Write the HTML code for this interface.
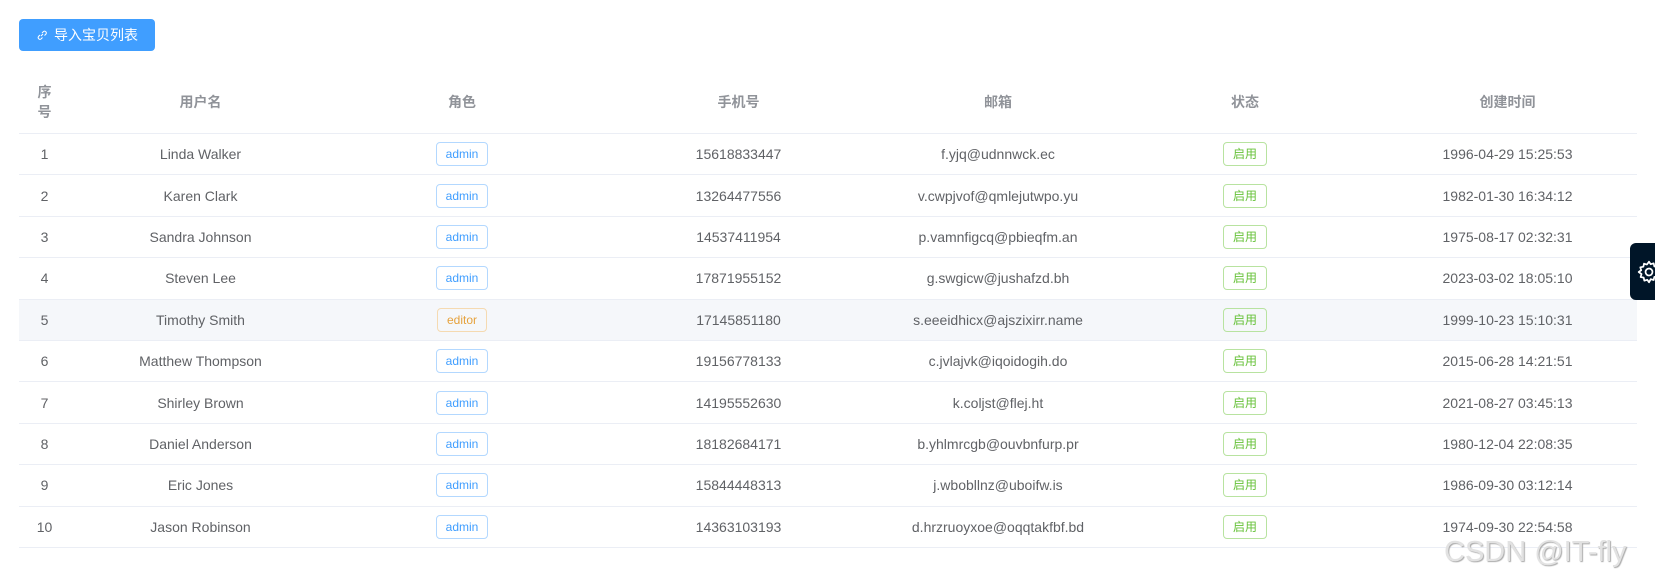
<!DOCTYPE html>
<html><head><meta charset="utf-8"><style>
body{margin:0;width:1655px;height:583px;background:#fff;font-family:"Liberation Sans","Noto Sans CJK SC",sans-serif;position:relative;overflow:hidden}
.btn{position:absolute;left:19px;top:19px;width:136px;height:32px;background:#409eff;border-radius:4px;color:#fff;font-size:14px;line-height:32px;text-align:center}
table{position:absolute;left:19px;top:71px;border-collapse:collapse;table-layout:fixed;width:1618px;font-size:14px;color:#606266}
th{color:#909399;font-weight:bold;height:62px;padding:0;border-bottom:1px solid #ebeef5}
td{height:40.4px;padding:0;text-align:center;border-bottom:1px solid #ebeef5}
th:first-child{padding:0 14px}
tr.h td{background:#f5f7fa}
.tag{display:inline-block;height:22px;line-height:22px;padding:0 9px;border:1px solid #b3d8ff;border-radius:4px;color:#409eff;font-size:12px}
.tag.w{border-color:#f5dab1;color:#e6a23c}
.tag.s{border-color:#b8e3a0;color:#67c23a}
.gear{position:absolute;left:1630px;top:243px;width:40px;height:57px;background:#001528;border-radius:6px}
.wm{position:absolute;left:1444px;top:536px;font-size:29px;color:#e2e2e2;text-shadow:1px 1px 1px #aaa}
</style></head><body>
<div class="btn"><svg width="12" height="12" viewBox="0 0 12 12" style="vertical-align:-1px;margin-right:6px"><path d="M5 7L7 5M4 6L2.5 7.5a1.8 1.8 0 0 0 2.5 2.5L6.5 8.5M6 4L7.5 2.5a1.8 1.8 0 0 1 2.5 2.5L8.5 6.5" stroke="#fff" fill="none" stroke-width="1"/></svg>导入宝贝列表</div>
<table>
<colgroup><col style="width:51px"><col style="width:261px"><col style="width:262px"><col style="width:291px"><col style="width:228px"><col style="width:266px"><col style="width:259px"></colgroup>
<tr><th>序号</th><th>用户名</th><th>角色</th><th>手机号</th><th>邮箱</th><th>状态</th><th>创建时间</th></tr>
<tr><td>1</td><td>Linda Walker</td><td><span class="tag">admin</span></td><td>15618833447</td><td>f.yjq@udnnwck.ec</td><td><span class="tag s">启用</span></td><td>1996-04-29 15:25:53</td></tr>
<tr><td>2</td><td>Karen Clark</td><td><span class="tag">admin</span></td><td>13264477556</td><td>v.cwpjvof@qmlejutwpo.yu</td><td><span class="tag s">启用</span></td><td>1982-01-30 16:34:12</td></tr>
<tr><td>3</td><td>Sandra Johnson</td><td><span class="tag">admin</span></td><td>14537411954</td><td>p.vamnfigcq@pbieqfm.an</td><td><span class="tag s">启用</span></td><td>1975-08-17 02:32:31</td></tr>
<tr><td>4</td><td>Steven Lee</td><td><span class="tag">admin</span></td><td>17871955152</td><td>g.swgicw@jushafzd.bh</td><td><span class="tag s">启用</span></td><td>2023-03-02 18:05:10</td></tr>
<tr class="h"><td>5</td><td>Timothy Smith</td><td><span class="tag w">editor</span></td><td>17145851180</td><td>s.eeeidhicx@ajszixirr.name</td><td><span class="tag s">启用</span></td><td>1999-10-23 15:10:31</td></tr>
<tr><td>6</td><td>Matthew Thompson</td><td><span class="tag">admin</span></td><td>19156778133</td><td>c.jvlajvk@iqoidogih.do</td><td><span class="tag s">启用</span></td><td>2015-06-28 14:21:51</td></tr>
<tr><td>7</td><td>Shirley Brown</td><td><span class="tag">admin</span></td><td>14195552630</td><td>k.coljst@flej.ht</td><td><span class="tag s">启用</span></td><td>2021-08-27 03:45:13</td></tr>
<tr><td>8</td><td>Daniel Anderson</td><td><span class="tag">admin</span></td><td>18182684171</td><td>b.yhlmrcgb@ouvbnfurp.pr</td><td><span class="tag s">启用</span></td><td>1980-12-04 22:08:35</td></tr>
<tr><td>9</td><td>Eric Jones</td><td><span class="tag">admin</span></td><td>15844448313</td><td>j.wbobllnz@uboifw.is</td><td><span class="tag s">启用</span></td><td>1986-09-30 03:12:14</td></tr>
<tr><td>10</td><td>Jason Robinson</td><td><span class="tag">admin</span></td><td>14363103193</td><td>d.hrzruoyxoe@oqqtakfbf.bd</td><td><span class="tag s">启用</span></td><td>1974-09-30 22:54:58</td></tr>
</table>
<div class="gear"><svg width="26" height="26" viewBox="0 0 24 24" style="position:absolute;left:6px;top:16px"><circle cx="12" cy="12" r="3.2" stroke="#fff" fill="none" stroke-width="1.6"/><path d="M12 2.5l1.6 2.3 2.7-.8.6 2.8 2.8.6-.8 2.7 2.3 1.6-2.3 1.6.8 2.7-2.8.6-.6 2.8-2.7-.8L12 21.5l-1.6-2.3-2.7.8-.6-2.8-2.8-.6.8-2.7L2.5 12l2.3-1.6-.8-2.7 2.8-.6.6-2.8 2.7.8z" stroke="#fff" fill="none" stroke-width="1.6" stroke-linejoin="round"/></svg></div>
<div class="wm">CSDN @IT-fly</div>
</body></html>
